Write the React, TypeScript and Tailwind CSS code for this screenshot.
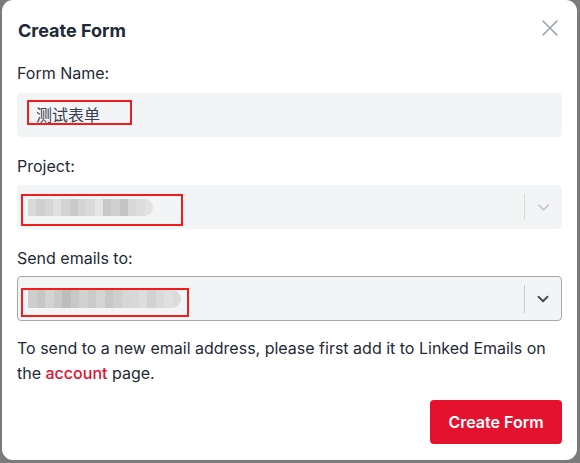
import { ChevronDown } from 'lucide-react';

const projectShades = ['#d9d9d9', '#cfcfcf', '#d6d6d6', '#e0e0e0', '#d3d3d3', '#c9c9c9', '#d4d4d4', '#dadada', '#e6e6e6', '#c8c8c8', '#d0d0d0', '#c4c4c4', '#d8d8d8', '#dcdcdc', '#e2e2e2'];
const emailShades = ['#cdcdcd', '#c6c6c6', '#d3d3d3', '#c9c9c9', '#bdbdbd', '#c8c8c8', '#d1d1d1', '#cacaca', '#d4d4d4', '#c7c7c7', '#cfcfcf', '#d6d6d6', '#d8d8d8', '#dddddd', '#d2d2d2', '#dadada', '#e0e0e0', '#dcdcdc'];

function Blur({ shades }: { shades: string[] }) {
  return (
    <div className="flex h-full overflow-hidden rounded-r-full">
      {shades.map((c, i) => (
        <div key={i} className="h-full w-[8.5px]" style={{ background: c }} />
      ))}
    </div>
  );
}

export default function App() {
  return (
    <div className="h-[463px] w-[580px] bg-[#7b7b7b] pb-[3px] pl-[2px] pr-[3px] font-['Inter',sans-serif] text-[#1f2937]">
      <div className="flex h-full flex-col rounded-[11px] bg-white px-[15px] pt-[17px]">
        <div className="flex items-center justify-between">
          <h2 className="pl-[1px] text-[18px] leading-7 font-bold text-[#1f2937]">Create Form</h2>
          <svg width="16" height="16" viewBox="0 0 16 16" className="mr-[4px] mb-[6px] text-[#9ca3af]">
            <path d="M1 1 L15 15 M15 1 L1 15" stroke="currentColor" strokeWidth="1.6" strokeLinecap="round" />
          </svg>
        </div>

        <label className="mt-[16px] text-[16px] leading-6">Form Name:</label>
        <div className="relative mt-[8px] flex h-[44px] items-center rounded bg-[#f3f4f6] pl-[19px] font-['Inter','Noto_Sans_CJK_SC',sans-serif] text-[16px] text-[#374151]">
          测试表单
          <div className="absolute top-[7px] left-[10px] h-[25px] w-[105px] border-2 border-[#f21c1c]" />
        </div>

        <label className="mt-[17px] text-[16px] leading-6">Project:</label>
        <div className="relative mt-[7px] flex h-[44px] items-center rounded bg-[#f3f4f6]">
          <div className="ml-[11px] h-[17px] w-[125px]">
            <Blur shades={projectShades} />
          </div>
          <div className="ml-auto h-[26px] w-px bg-[#d9d9d9]" />
          <div className="flex w-[37px] justify-center text-[#c8c8c8]">
            <ChevronDown size={19} strokeWidth={2} />
          </div>
          <div className="absolute top-[9px] left-[4px] h-[32px] w-[162px] border-2 border-[#f21c1c]" />
        </div>

        <label className="mt-[17px] text-[16px] leading-6">Send emails to:</label>
        <div className="relative mt-[6px] flex h-[45px] items-center rounded border border-[#a8a8a8] bg-[#f3f4f6]">
          <div className="ml-[10px] h-[18px] w-[153px]">
            <Blur shades={emailShades} />
          </div>
          <div className="ml-auto h-[28px] w-px bg-[#cccccc]" />
          <div className="flex w-[36px] justify-center text-[#4b4b4b]">
            <ChevronDown size={18} strokeWidth={2.5} />
          </div>
          <div className="absolute top-[11px] left-[3px] h-[29px] w-[168px] border-2 border-[#f21c1c]" />
        </div>

        <p className="mt-[15px] text-[16px] leading-[25px]">
          To send to a new email address, please first add it to Linked Emails on the{' '}
          <a className="font-medium text-[#e5112f]">account</a> page.
        </p>

        <div className="mt-[14px] flex justify-end">
          <button className="h-[44px] w-[132px] rounded bg-[#e5122f] text-[16px] font-semibold text-white">
            Create Form
          </button>
        </div>
      </div>
    </div>
  );
}
